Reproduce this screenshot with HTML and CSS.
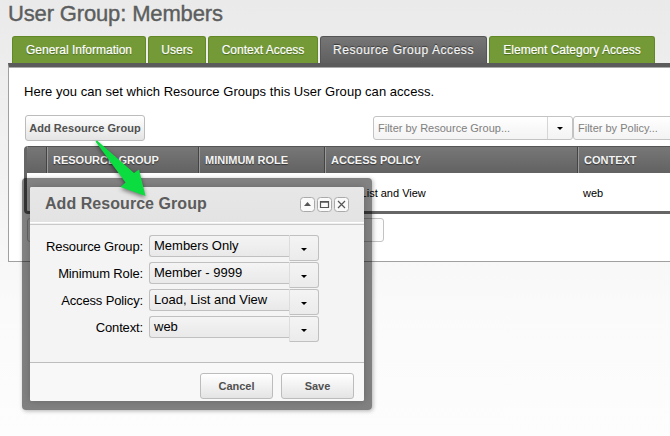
FILE: index.html
```html
<!DOCTYPE html>
<html lang="en">
<head>
<meta charset="utf-8">
<title>User Group: Members</title>
<link rel="stylesheet" href="styles.css">
</head>
<body>
<h1>User Group: Members</h1>
<nav class="tabs">
  <a class="tab t1"><span>General Information</span></a>
  <a class="tab t2"><span>Users</span></a>
  <a class="tab t3"><span>Context Access</span></a>
  <a class="tab t4 active"><span>Resource Group Access</span></a>
  <a class="tab t5"><span>Element Category Access</span></a>
</nav>
<main class="panel">
  <p class="intro"><span>Here you can set which Resource Groups this User Group can access.</span></p>
  <div class="toolbar">
    <button class="btn add"><span>Add Resource Group</span></button>
    <div class="filter"><span>Filter by Resource Group...</span><i class="trigger"></i></div>
    <div class="filter second"><span>Filter by Policy...</span></div>
  </div>
  <section class="grid">
    <div class="head">
      <div></div><div><span>RESOURCE GROUP</span></div><div><span>MINIMUM ROLE</span></div><div><span>ACCESS POLICY</span></div><div><span>CONTEXT</span></div>
    </div>
    <div class="row">
      <div></div><div></div><div></div><div><span>Load, List and View</span></div><div><span>web</span></div>
    </div>
  </section>
  <div class="pager"></div>
</main>

<div class="window">
  <div class="content">
    <header>
      <h2>Add Resource Group</h2>
      <div class="tools">
        <svg width="15" height="15" viewBox="0 0 15 15"><rect class="box" x=".5" y=".5" width="14" height="14" rx="3"/><path class="fill" d="M4 9L7.5 5L11 9Z"/></svg>
        <svg width="15" height="15" viewBox="0 0 15 15"><rect class="box" x=".5" y=".5" width="14" height="14" rx="3"/><path class="line" d="M3.5 4.5H11.5V10.5H3.5ZM3.5 5.2H11.5"/></svg>
        <svg width="15" height="15" viewBox="0 0 15 15"><rect class="box" x=".5" y=".5" width="14" height="14" rx="3"/><path class="line cross" d="M4 4L11 11M11 4L4 11"/></svg>
      </div>
    </header>
    <div class="form">
      <label><span>Resource Group:</span></label><div class="combo"><div><span>Members Only</span></div><i class="trigger"></i></div>
      <label><span>Minimum Role:</span></label><div class="combo"><div><span>Member - 9999</span></div><i class="trigger"></i></div>
      <label><span>Access Policy:</span></label><div class="combo"><div><span>Load, List and View</span></div><i class="trigger"></i></div>
      <label><span>Context:</span></label><div class="combo"><div><span>web</span></div><i class="trigger"></i></div>
    </div>
    <footer>
      <button class="btn"><span>Cancel</span></button>
      <button class="btn"><span>Save</span></button>
    </footer>
  </div>
</div>
<svg class="arrow" width="70" height="70" viewBox="85 135 70 70"><path d="M95.5 141.5L97 140.5L134 173L139 169.5L145.5 196L120.5 187L125.5 182.5Z"/></svg>
</body>
</html>
```
FILE: styles.css
```css
* { box-sizing: border-box; }
body {
  margin: 0; width: 670px; height: 436px; overflow: hidden; position: relative;
  background: linear-gradient(#eaeaea, #f1f1f1 35%, #fafafa 70%, #fdfdfd);
  font-family: "Liberation Sans", Arial, sans-serif; font-size: 13px; color: #111;
}
span { white-space: nowrap; }
h1 { margin: 0; height: 36px; padding-left: 8px; font-size: 22px; line-height: 28px; font-weight: 400; letter-spacing: -.15px; color: #5c5e5e; -webkit-text-stroke: .4px #5c5e5e; }
.tabs { display: flex; gap: 2px; padding-left: 12px; }
.tab {
  height: 27px; line-height: 26px; text-align: center; font-size: 12px; color: #fff;
  background: #739a37; border: 1px solid #628727; border-bottom: 0; border-radius: 3px 3px 0 0;
  text-shadow: 0 1px 1px #4a6620; -webkit-text-stroke: .2px #fff;
}
.t1 { width: 134px; } .t2 { width: 58px; } .t3 { width: 110px; } .t4 { width: 167px; } .t5 { width: 166px; }
.tab.active { background: linear-gradient(#767676, #5f5f5f); border-color: #555; text-shadow: 0 -1px 1px #333; letter-spacing: .55px; color: #eee; }
.panel { margin-left: 8px; width: 670px; height: 199px; border: 1px solid #a0a0a0; border-top: 4px solid #5b5b5b; background: #fff; box-shadow: inset 0 1px #aaa; }
.intro { margin: 0; padding: 17px 0 0 15px; line-height: 16px; height: 48px; letter-spacing: .04px; color: #000; }
.toolbar { display: flex; height: 31px; padding-left: 16px; }
.toolbar > * { flex: none; }
.btn {
  height: 26px; padding: 0; border: 1px solid #bcbcbc; border-radius: 3px; background: linear-gradient(#fff, #e4e4e4);
  font: bold 11px/24px "Liberation Sans", Arial, sans-serif; color: #505050; text-align: center;
}
.add { width: 120px; letter-spacing: .05px; }
.filter { display: flex; justify-content: space-between; margin: 1px 0 0 228px; width: 200px; height: 24px; padding-left: 4px; line-height: 23px; border: 1px solid #c3c3c3; border-radius: 3px; background: linear-gradient(#fff, #f3f3f3); color: #808080; font-size: 11px; }
.filter.second { margin-left: 0; }
.trigger { width: 25px; border-left: 1px solid #d5d5d5; display: grid; place-items: center; }
.trigger::after { content: ""; border: 3px solid transparent; border-top-color: #000; border-bottom: 0; }
.grid { margin-left: 15px; width: 660px; height: 68px; border: 3px solid #666; border-top: 0; border-radius: 4px; overflow: hidden; }
.head, .row { display: grid; grid-template-columns: 20px 152px 126px 253px 110px; }
.head { height: 27px; margin-left: -1px; background: linear-gradient(#777, #626262); border-top: 1px solid #555; font: bold 11px/26px "Liberation Sans", Arial, sans-serif; color: #f4f4f4; text-shadow: 0 1px 1px #333; }
.head div + div { border-left: 1px solid #444; box-shadow: inset 1px 0 #999; padding-left: 6px; }
.row { font-size: 11px; line-height: 40px; color: #000; }
.row div { padding-left: 5px; }
.pager { width: 357px; height: 24px; margin: 4px 0 0 18px; border: 1px solid #c3c3c3; border-radius: 3px; background: #fcfcfc; }

.window { position: absolute; left: 22px; top: 178px; width: 350px; height: 232px; padding: 9px 8px; border-radius: 4px; background: rgba(0,0,0,.49); box-shadow: 1px 1px 4px rgba(0,0,0,.3); }
.content { height: 214px; background: #f4f4f4; border-radius: 2px; overflow: hidden; box-shadow: 0 0 7px rgba(0,0,0,.2); }
header { display: flex; justify-content: space-between; height: 38px; background: linear-gradient(#e7e7e7, #e3e3e3 35px, #fff 35px, #fff 36px, #f0f0f0 36px, #f0f0f0 37px, #c9c9c9 37px); }
h2 { margin: 0; padding-left: 15px; font-size: 16px; line-height: 33px; letter-spacing: .05px; color: #5c5c5c; }
.tools { display: flex; gap: 2px; padding: 10px 15px 0 0; }
.box { fill: #fafafa; stroke: #aaa; }
.fill { fill: #555; }
.line { fill: none; stroke: #555; stroke-width: 1.2; }
.form { display: grid; grid-template-columns: 113px 170px; column-gap: 6px; grid-auto-rows: 27px; height: 137px; padding-top: 10px; color: #000; }
label { text-align: right; line-height: 23px; letter-spacing: -.14px; }
.combo { display: flex; height: 26px; }
.combo div { width: 140px; height: 22px; padding-left: 4px; line-height: 20px; border: 1px solid #c0c0c0; border-right: 0; border-radius: 3px 0 0 3px; background: linear-gradient(#f4f4f4, #e9e9e9); }
.combo .trigger { width: 30px; padding-top: 3px; border: 1px solid #c0c0c0; border-left-color: #ddd; border-radius: 0 3px 3px 0; background: linear-gradient(#f4f4f4, #ebebeb); }
footer { display: flex; justify-content: flex-end; gap: 8px; height: 39px; padding: 10px 10px 0 0; border-top: 1px solid #bdbdbd; background: #f8f8f8; }
footer .btn { width: 73px; }
.arrow { position: absolute; left: 85px; top: 135px; overflow: visible; filter: drop-shadow(0 2px 2px rgba(0,0,0,.5)); }
.arrow path { fill: #0bdc3f; }
```
